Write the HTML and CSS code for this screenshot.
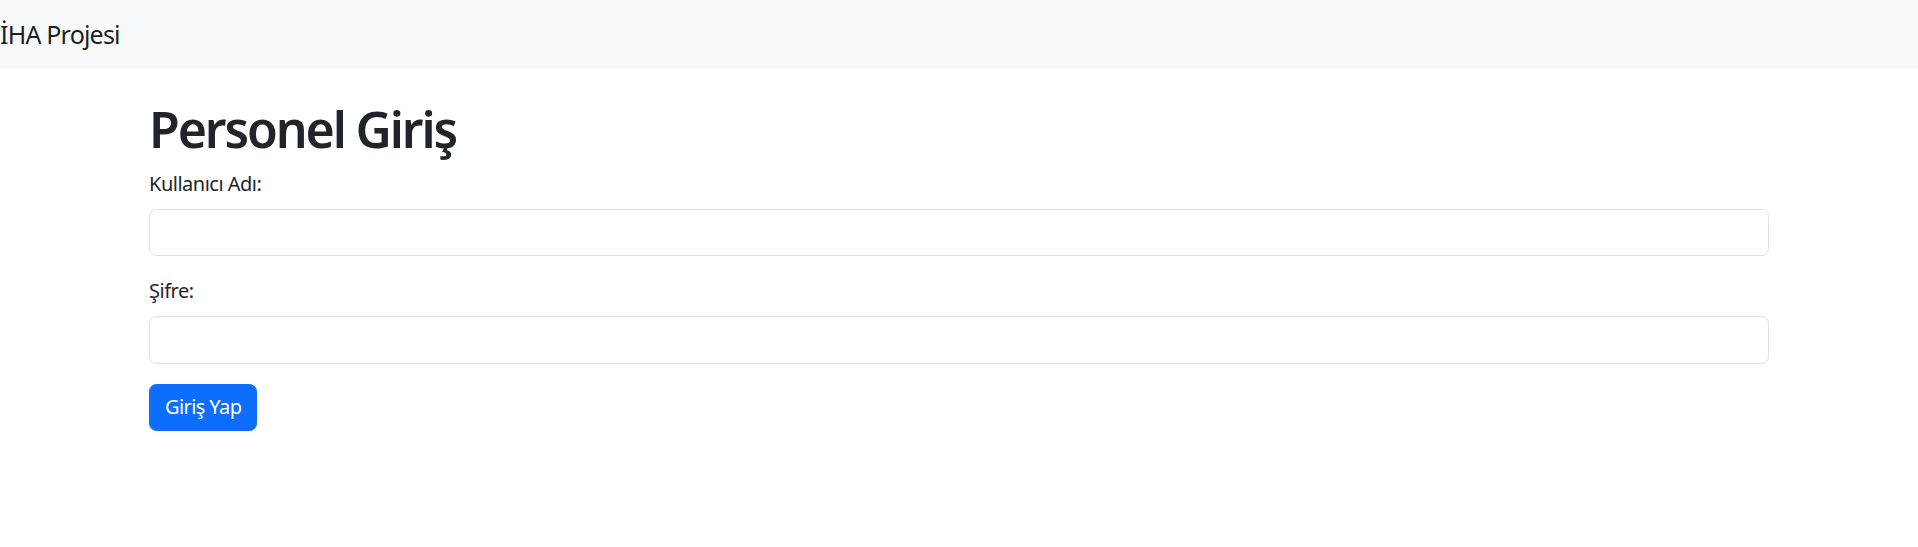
FILE: index.html
```html
<!DOCTYPE html>
<html lang="tr">
<head>
<meta charset="utf-8">
<title>Personel Giriş</title>
<link rel="stylesheet" href="styles.css">
</head>
<body>
<nav class="navbar">
  <a class="navbar-brand" href="#">İHA Projesi</a>
</nav>
<div class="container">
  <h1 class="title">Personel Giriş</h1>
  <form class="login-form">
    <div class="field">
      <label class="form-label" for="kullanici">Kullanıcı Adı:</label>
      <input class="form-control" type="text" id="kullanici">
    </div>
    <div class="field">
      <label class="form-label" for="sifre">Şifre:</label>
      <input class="form-control" type="password" id="sifre">
    </div>
    <button class="btn-primary" type="submit">Giriş Yap</button>
  </form>
</div>
</body>
</html>
```

FILE: styles.css
```css
* { box-sizing: border-box; }
html, body {
  margin: 0;
  padding: 0;
}
body {
  font-family: "Noto Sans", "Open Sans", sans-serif;
  font-size: 20px;
  line-height: 1.5;
  color: #212529;
  background: #fff;
}
.navbar {
  display: flex;
  align-items: center;
  background: #f8f9fa;
  padding: 9.25px 0;
}
.navbar-brand {
  display: inline-block;
  font-size: 25px;
  line-height: 37.5px;
  padding: 6.25px 0;
  letter-spacing: -0.8px;
  color: rgba(0, 0, 0, 0.9);
  text-decoration: none;
}
.container {
  max-width: 1650px;
  margin: 30px auto 0;
  padding: 0 15px;
}
.title {
  margin: 0 0 10px;
  font-size: 50px;
  font-weight: 600;
  line-height: 60px;
  letter-spacing: -2.1px;
}
.field {
  margin-bottom: 20px;
}
.form-label {
  display: inline-block;
  margin-bottom: 10px;
  letter-spacing: -0.5px;
}
.form-control {
  display: block;
  width: 100%;
  height: 47.5px;
  padding: 7.5px 15px;
  font: inherit;
  color: #212529;
  background: #fff;
  border: 1.25px solid #dee2e6;
  border-radius: 7.5px;
  outline: none;
}
.btn-primary {
  display: inline-block;
  font: inherit;
  line-height: 30px;
  letter-spacing: -0.6px;
  padding: 7.5px 15px;
  color: #fff;
  background: #0d6efd;
  border: 1.25px solid #0d6efd;
  border-radius: 7.5px;
  cursor: pointer;
}
```
